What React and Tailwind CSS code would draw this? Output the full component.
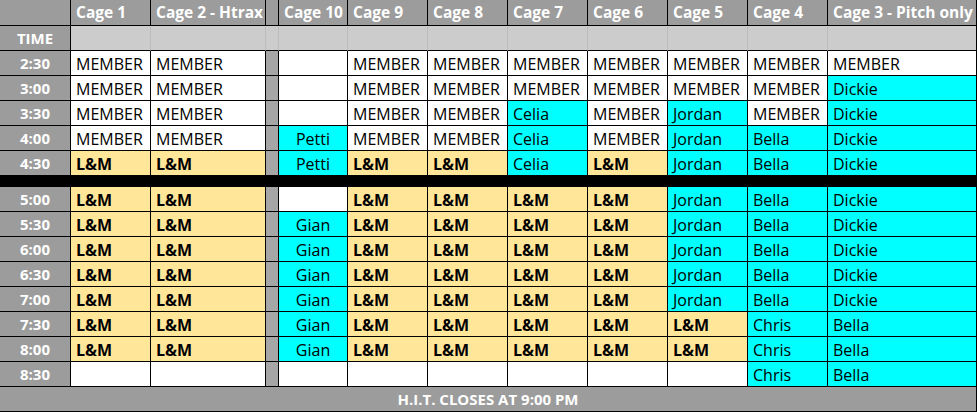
import React from 'react';

const COLS = 'grid grid-cols-[71px_80px_115px_13px_69px_80px_80px_80px_80px_80px_80px_149px]';
const HEADERS = ['Cage 1', 'Cage 2 - Htrax', null, 'Cage 10', 'Cage 9', 'Cage 8', 'Cage 7', 'Cage 6', 'Cage 5', 'Cage 4', 'Cage 3 - Pitch only'];

const M = { t: 'MEMBER', k: 'm' };
const L = { t: 'L&M', k: 'l' };
const E = { t: '', k: 'e' };
const c = (t) => ({ t, k: 'c' });

// order: cage1, cage2, cage10, cage9, cage8, cage7, cage6, cage5, cage4, cage3
const before = [
    ['2:30', [M, M, E, M, M, M, M, M, M, M]],
    ['3:00', [M, M, E, M, M, M, M, M, M, c('Dickie')]],
    ['3:30', [M, M, E, M, M, c('Celia'), M, c('Jordan'), M, c('Dickie')]],
    ['4:00', [M, M, c('Petti'), M, M, c('Celia'), M, c('Jordan'), c('Bella'), c('Dickie')]],
    ['4:30', [L, L, c('Petti'), L, L, c('Celia'), L, c('Jordan'), c('Bella'), c('Dickie')]],
];

const evening = [L, L, c('Gian'), L, L, L, L, c('Jordan'), c('Bella'), c('Dickie')];
const late = [L, L, c('Gian'), L, L, L, L, L, c('Chris'), c('Bella')];

const after = [
    ['5:00', [L, L, E, L, L, L, L, c('Jordan'), c('Bella'), c('Dickie')]],
    ['5:30', evening],
    ['6:00', evening],
    ['6:30', evening],
    ['7:00', evening],
    ['7:30', late],
    ['8:00', late],
    ['8:30', [E, E, E, E, E, E, E, E, c('Chris'), c('Bella')]],
];

function Cell({ cell, center }) {
    const bg = cell.k === 'l' ? 'bg-[#ffe699] font-bold' : cell.k === 'c' ? 'bg-[#00ffff]' : 'bg-white';
    return (
        <div className={`h-[25px] border-r border-b border-black flex items-center pt-[1px] overflow-hidden whitespace-nowrap text-[16px] ${center ? 'justify-center' : 'pl-[5px]'} ${bg}`}>
            {cell.t}
        </div>
    );
}

function Row({ time, cells }) {
    return (
        <div className={COLS}>
            <div className="h-[25px] border-r border-b border-black bg-[#9c9c9c] text-white font-bold flex items-center justify-center pt-[1px]">
                {time}
            </div>
            <Cell cell={cells[0]} />
            <Cell cell={cells[1]} />
            <div className="h-[25px] border-r border-b border-black bg-[#a6a6a6]"></div>
            <Cell cell={cells[2]} center />
            {cells.slice(3).map((cell, i) => (
                <Cell key={i} cell={cell} />
            ))}
        </div>
    );
}

export default function App() {
    return (
        <div className="w-[977px] h-[412px] bg-white text-black text-[15px] leading-none overflow-hidden" style={{ fontFamily: '"Open Sans", "Noto Sans", sans-serif' }}>
            <div className={COLS}>
                <div className="h-[26px] border-r border-b border-black bg-[#9c9c9c]"></div>
                {HEADERS.map((h, i) => (
                    <div key={i} className={`h-[26px] border-r border-b border-black bg-[#9c9c9c] text-white text-[15.5px] font-bold flex items-center whitespace-nowrap overflow-hidden ${i === 2 ? '' : 'pl-[5px]'}`}>
                        {h}
                    </div>
                ))}
            </div>
            <div className={COLS}>
                <div className="h-[25px] border-r border-b border-black bg-[#9c9c9c] text-white font-bold flex items-center justify-center pt-[1px]">TIME</div>
                {HEADERS.map((h, i) => (
                    <div key={i} className={`h-[25px] border-b border-black bg-[#cccccc] ${i === HEADERS.length - 1 ? 'border-r border-r-black' : 'border-r border-r-[#bdbdbd]'}`}></div>
                ))}
            </div>
            {before.map(([t, cells]) => (
                <Row key={t} time={t} cells={cells} />
            ))}
            <div className="h-[11px] bg-black"></div>
            {after.map(([t, cells]) => (
                <Row key={t} time={t} cells={cells} />
            ))}
            <div className="h-[25px] border-r border-b border-black bg-[#9c9c9c] text-white font-bold flex items-center justify-center pt-[1px]">
                H.I.T. CLOSES AT 9:00 PM
            </div>
        </div>
    );
}
